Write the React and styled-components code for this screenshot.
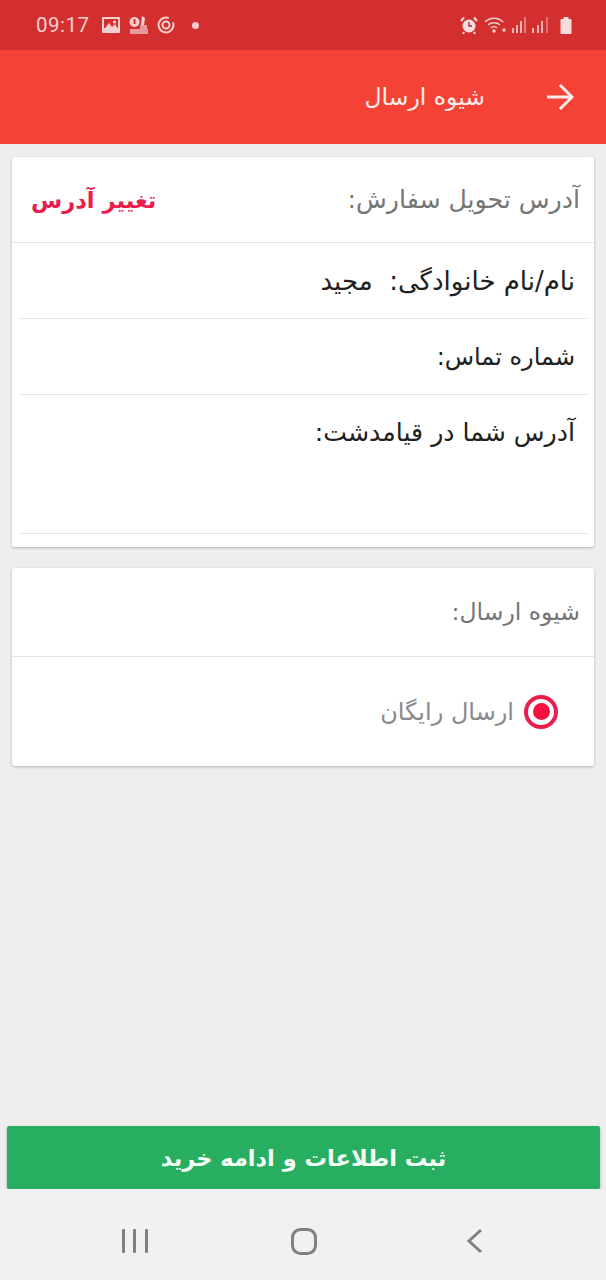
import React from "react";
import styled, { createGlobalStyle } from "styled-components";

const FONT = `"DejaVu Sans", "Noto Sans", sans-serif`;

const GlobalStyle = createGlobalStyle`
  html, body {
    margin: 0;
    padding: 0;
    background: #eeeeee;
  }
  * {
    box-sizing: border-box;
  }
`;

const StatusLeftIcons = () => (
  <St.StatusGroup $gap={9}>
    <St.Clock>09:17</St.Clock>
    <svg width="18" height="16" viewBox="0 0 18 16">
      <rect x="0" y="0" width="18" height="16" rx="1" fill="#f3cfcf" />
      <rect x="2" y="2" width="14" height="9" fill="#d32f2f" />
      <circle cx="12.5" cy="5" r="1.5" fill="#f3cfcf" />
      <path d="M1 14 L7 6 L10 10 L13 7 L17 14 Z" fill="#f3cfcf" />
    </svg>
    <svg width="19" height="18" viewBox="0 0 19 18">
      <circle cx="5.5" cy="6" r="5" fill="#f3cfcf" />
      <rect x="4.5" y="3" width="2" height="5" fill="#d32f2f" />
      <path d="M13 0 L16 2 L15 9 L12 9 Z" fill="#f3cfcf" />
      <path d="M1 13 H19 V18 H1 Z M11 9 H18 V13 H11 Z" fill="#e79a9a" />
    </svg>
    <svg width="18" height="18" viewBox="0 0 18 18" fill="none" stroke="#f3cfcf">
      <circle cx="9" cy="9" r="7.5" strokeWidth="2" strokeDasharray="38 6" />
      <circle cx="9" cy="9" r="3.5" strokeWidth="2" />
    </svg>
    <St.Dot />
  </St.StatusGroup>
);

const StatusRightIcons = () => (
  <St.StatusGroup $gap={6}>
    <svg width="18" height="18" viewBox="0 0 18 18">
      <circle cx="9" cy="10" r="6.5" fill="#f6dcdc" />
      <path d="M9 6 V10 H12" stroke="#a83232" strokeWidth="1.4" fill="none" />
      <path d="M1 5 L4 1.5 M17 5 L14 1.5 M4 16 L3 18 M14 16 L15 18" stroke="#f6dcdc" strokeWidth="2" />
    </svg>
    <svg width="22" height="16" viewBox="0 0 22 16" fill="none" stroke="#f3cfcf" strokeWidth="1.5">
      <path d="M1 5 C6 0 14 0 19 5" />
      <path d="M4 8 C7 5 13 5 16 8" />
      <path d="M7 11 C9 9 11 9 13 11" />
      <circle cx="10" cy="14" r="1" fill="#f3cfcf" />
      <circle cx="20" cy="13" r="1" fill="#f3cfcf" />
    </svg>
    <svg width="14" height="16" viewBox="0 0 14 16" fill="#f0b4b4">
      <rect x="0" y="11" width="2" height="5" />
      <rect x="4" y="8" width="2" height="8" />
      <rect x="8" y="4" width="2" height="12" />
      <rect x="12" y="0" width="2" height="16" opacity="0.6" />
    </svg>
    <svg width="16" height="16" viewBox="0 0 16 16" fill="#f0b4b4">
      <rect x="0" y="11" width="2" height="5" />
      <rect x="5" y="8" width="2" height="8" />
      <rect x="9" y="4" width="2" height="12" />
      <rect x="14" y="0" width="2" height="16" opacity="0.5" />
    </svg>
    <St.BatteryWrap>
      <svg width="12" height="17" viewBox="0 0 12 17">
        <rect x="3.5" y="0" width="5" height="2" fill="#f6dcdc" />
        <rect x="0.5" y="2" width="11" height="15" rx="1" fill="#f6dcdc" />
      </svg>
    </St.BatteryWrap>
  </St.StatusGroup>
);

const App = () => {
  return (
    <St.Page dir="rtl">
      <GlobalStyle />

      <St.StatusBar dir="ltr">
        <StatusLeftIcons />
        <StatusRightIcons />
      </St.StatusBar>

      <St.AppBar>
        <St.BackBtn type="button" aria-label="back">
          <svg width="27" height="28" viewBox="0 0 27 28" fill="none" stroke="#fdecea" strokeWidth="3">
            <path d="M0 14 H25" />
            <path d="M13 2 L25 14 L13 26" />
          </svg>
        </St.BackBtn>
        <St.AppTitle>شیوه ارسال</St.AppTitle>
      </St.AppBar>

      <St.Content>
        <St.Card $pad={13}>
          <St.CardHead $height={86}>
            <St.HeadLabel $size={25.2}>آدرس تحویل سفارش:</St.HeadLabel>
            <St.ChangeLink>تغییر آدرس</St.ChangeLink>
          </St.CardHead>
          <St.InfoRow $height={76} $size={26}>نام/نام خانوادگی:&nbsp;&nbsp;مجید</St.InfoRow>
          <St.InfoRow $height={76} $size={24}>شماره تماس:</St.InfoRow>
          <St.InfoRow $height={139} $size={25.2}>آدرس شما در قیامدشت:</St.InfoRow>
        </St.Card>

        <St.Card $pad={0}>
          <St.CardHead $height={89}>
            <St.HeadLabel $size={23.5}>شیوه ارسال:</St.HeadLabel>
          </St.CardHead>
          <St.OptionRow>
            <St.Radio>
              <St.RadioDot />
            </St.Radio>
            <St.OptionLabel>ارسال رایگان</St.OptionLabel>
          </St.OptionRow>
        </St.Card>
      </St.Content>

      <St.SubmitBtn type="button">ثبت اطلاعات و ادامه خرید</St.SubmitBtn>

      <St.NavBar dir="ltr">
        <svg width="26" height="24" viewBox="0 0 26 24" fill="#808080">
          <rect x="0" y="0" width="3" height="24" rx="1" />
          <rect x="11" y="0" width="3" height="24" rx="1" />
          <rect x="23" y="0" width="3" height="24" rx="1" />
        </svg>
        <svg width="26" height="27" viewBox="0 0 26 27" fill="none" stroke="#808080" strokeWidth="3">
          <rect x="1.5" y="1.5" width="23" height="24" rx="8" />
        </svg>
        <svg width="23" height="26" viewBox="0 0 23 26" fill="none" stroke="#808080" strokeWidth="3">
          <path d="M21 2 L9 13 L21 24" />
        </svg>
      </St.NavBar>
    </St.Page>
  );
};

export default App;

const St = {
  Page: styled.div`
    display: flex;
    flex-direction: column;

    width: 606px;
    height: 1280px;
    overflow: hidden;

    background-color: #eeeeee;
    font-family: ${FONT};
  `,

  StatusBar: styled.div`
    display: flex;
    align-items: center;
    justify-content: space-between;

    flex-shrink: 0;
    height: 50px;
    padding: 0 34px 0 36px;

    background-color: #d32f2f;
  `,

  StatusGroup: styled.div`
    display: flex;
    align-items: center;
    gap: ${({ $gap }) => $gap}px;
  `,

  Clock: styled.span`
    margin-right: 3px;

    color: #f3cfcf;
    font-family: "Roboto", sans-serif;
    font-size: 20.5px;
    letter-spacing: 0.5px;
  `,

  Dot: styled.span`
    width: 7px;
    height: 7px;
    margin-left: 8px;

    border-radius: 50%;
    background-color: #f3cfcf;
  `,

  BatteryWrap: styled.span`
    display: flex;
    margin-left: 6px;
  `,

  AppBar: styled.header`
    display: flex;
    align-items: center;

    flex-shrink: 0;
    height: 94px;
    padding: 0 32px 0 0;

    background-color: #f44336;
  `,

  BackBtn: styled.button`
    display: flex;
    padding: 0;

    border: none;
    background: none;
  `,

  AppTitle: styled.h1`
    margin: 0 62px 0 0;

    color: #fdecea;
    font-size: 23.5px;
    font-weight: 400;
  `,

  Content: styled.main`
    display: flex;
    flex-direction: column;
    gap: 21px;

    padding: 13px 12px 0;
  `,

  Card: styled.section`
    display: flex;
    flex-direction: column;

    padding-bottom: ${({ $pad }) => $pad}px;

    border-radius: 3px;
    background-color: #ffffff;
    box-shadow: 0 1px 3px rgba(0, 0, 0, 0.25);
  `,

  CardHead: styled.div`
    display: flex;
    align-items: center;
    justify-content: space-between;

    height: ${({ $height }) => $height}px;
    padding: 0 14px 0 19px;

    border-bottom: 1px solid #e4e4e4;
  `,

  HeadLabel: styled.span`
    color: #757575;
    font-size: ${({ $size }) => $size}px;
  `,

  ChangeLink: styled.span`
    color: #e91e4d;
    font-size: 22.6px;
    font-weight: 700;
  `,

  InfoRow: styled.div`
    height: ${({ $height }) => $height}px;
    margin: 0 7px;
    padding: 22px 12px 0 0;

    border-bottom: 1px solid #e4e4e4;

    color: #212121;
    font-size: ${({ $size }) => $size}px;
    line-height: 32px;
  `,

  OptionRow: styled.label`
    display: flex;
    align-items: center;
    gap: 10px;

    height: 109px;
    padding: 0 36px 0 0;
  `,

  Radio: styled.span`
    display: flex;
    align-items: center;
    justify-content: center;

    width: 34px;
    height: 34px;

    border: 4px solid #e91e4d;
    border-radius: 50%;
  `,

  RadioDot: styled.span`
    width: 17px;
    height: 17px;

    border-radius: 50%;
    background-color: #f5123f;
  `,

  OptionLabel: styled.span`
    color: #8a8a8a;
    font-size: 24px;
  `,

  SubmitBtn: styled.button`
    flex-shrink: 0;
    height: 63px;
    margin: auto 6px 0 7px;

    border: none;
    border-radius: 2px;
    background-color: #27ae60;
    box-shadow: 0 2px 3px rgba(0, 0, 0, 0.3);

    color: #f4fff8;
    font-family: ${FONT};
    font-size: 22.5px;
    font-weight: 700;
  `,

  NavBar: styled.nav`
    display: flex;
    align-items: center;
    gap: 143px;

    flex-shrink: 0;
    height: 91px;
    padding: 13px 0 0 122px;

    background-color: #f1f1f1;
  `,
};
